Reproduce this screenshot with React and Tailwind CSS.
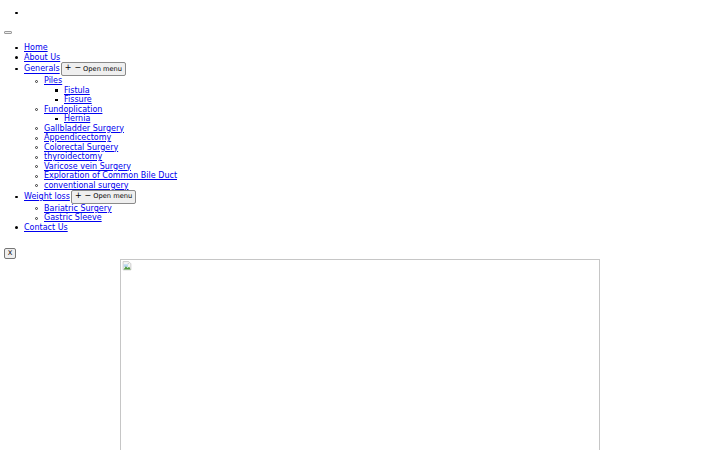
import React from 'react';

const link = "text-[#0000ee] underline";

// list markers drawn by hand so they sit like the scaled-down page
function Marker({ type = 'disc', top = 'top-[3.5px]' }) {
  if (type === 'circle') {
    return <span className={`absolute -left-[9px] ${top} h-[3px] w-[3px] rounded-full border-[0.8px] border-[#333]`} />;
  }
  if (type === 'square') {
    return <span className={`absolute -left-[9px] ${top} h-[2.5px] w-[2.5px] bg-black`} />;
  }
  return <span className={`absolute -left-[9px] ${top} h-[2.5px] w-[2.5px] rounded-full bg-black`} />;
}

function Item({ type, children, tall }) {
  return (
    <li className="relative">
      <Marker type={type} top={tall ? 'top-[5.5px]' : 'top-[3.5px]'} />
      {children}
    </li>
  );
}

function MenuButton() {
  return (
    <button className="ml-[1px] inline-flex h-[13.5px] items-center rounded-[2px] border border-[#8a8a8a] bg-[#efefef] px-[3px] align-middle text-black">
      <span className="relative -top-[1px] text-[8px] leading-none">+</span>
      <span className="relative -top-[1px] ml-[3px] text-[8px] leading-none">−</span>
      <span className="ml-[2px] text-[6.67px] leading-none">Open menu</span>
    </button>
  );
}

function BrokenImage() {
  return (
    <svg width="10" height="10" viewBox="0 0 18 18" className="ml-[1px] mt-[1px]">
      <path d="M2 1h10l4 4v11H2z" fill="#f4f4f4" stroke="#b8b8b8" strokeWidth="1.2" />
      <path d="M3 6h8v5H3z" fill="#b9d6ef" />
      <path d="M3 15.5l4-6 3 3 3-2 2.5 5z" fill="#4f9a3e" />
      <circle cx="11.5" cy="4.5" r="1.5" fill="#d0d0d0" />
    </svg>
  );
}

export default function App() {
  return (
    <div className="min-h-[450px] bg-white px-[4px] pt-[8px] font-['DejaVu_Sans',sans-serif] text-[8px] leading-[9.5px] text-black">
      <ul className="list-none pl-[20px]">
        <li className="relative h-[9.5px]">
          <Marker />
        </li>
      </ul>

      <div className="mt-[8px] flex h-[9.5px] items-end pb-[1px]">
        <button className="h-[3.5px] w-[8px] rounded-[1px] border border-[#9a9a9a] bg-[#efefef]" />
      </div>

      <ul className="mt-[8.25px] list-none pl-[20px]">
        <Item><a href="#" className={link}>Home</a></Item>
        <Item><a href="#" className={link}>About Us</a></Item>
        <li className="relative leading-[13.5px]">
          <Marker top="top-[5.5px]" />
          <a href="#" className={link}>Generals</a>
          <MenuButton />
          <ul className="list-none pl-[20px] leading-[9.5px]">
            <li className="relative">
              <Marker type="circle" />
              <a href="#" className={link}>Piles</a>
              <ul className="list-none pl-[20px]">
                <Item type="square"><a href="#" className={link}>Fistula</a></Item>
                <Item type="square"><a href="#" className={link}>Fissure</a></Item>
              </ul>
            </li>
            <li className="relative">
              <Marker type="circle" />
              <a href="#" className={link}>Fundoplication</a>
              <ul className="list-none pl-[20px]">
                <Item type="square"><a href="#" className={link}>Hernia</a></Item>
              </ul>
            </li>
            <Item type="circle"><a href="#" className={link}>Gallbladder Surgery</a></Item>
            <Item type="circle"><a href="#" className={link}>Appendicectomy</a></Item>
            <Item type="circle"><a href="#" className={link}>Colorectal Surgery</a></Item>
            <Item type="circle"><a href="#" className={link}>thyroidectomy</a></Item>
            <Item type="circle"><a href="#" className={link}>Varicose vein Surgery</a></Item>
            <Item type="circle"><a href="#" className={link}>Exploration of Common Bile Duct</a></Item>
            <Item type="circle"><a href="#" className={link}>conventional surgery</a></Item>
          </ul>
        </li>
        <li className="relative leading-[13.5px]">
          <Marker top="top-[5.5px]" />
          <a href="#" className={link}>Weight loss</a>
          <MenuButton />
          <ul className="list-none pl-[20px] leading-[9.5px]">
            <Item type="circle"><a href="#" className={link}>Bariatric Surgery</a></Item>
            <Item type="circle"><a href="#" className={link}>Gastric Sleeve</a></Item>
          </ul>
        </li>
        <Item><a href="#" className={link}>Contact Us</a></Item>
      </ul>

      <div className="mt-[16px] flex">
        <button className="flex h-[11px] w-[12px] items-center justify-center rounded-[2px] border border-[#767676] bg-[#efefef] text-[6.67px] leading-none text-black">
          X
        </button>
      </div>

      <div className="mx-auto h-[300px] w-[480px] border border-[#c6c6c6]">
        <BrokenImage />
      </div>
    </div>
  );
}
